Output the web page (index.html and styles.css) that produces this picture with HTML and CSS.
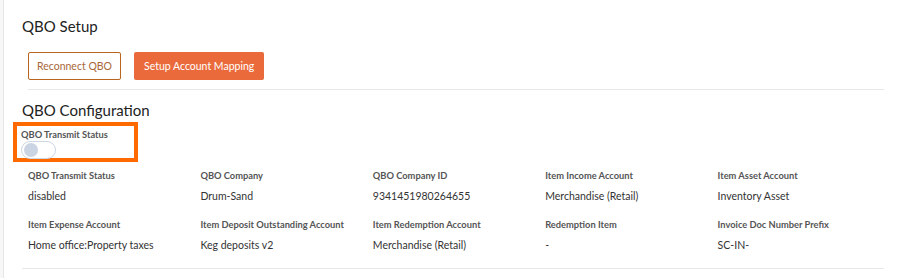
FILE: index.html
```html
<!DOCTYPE html>
<html lang="en">
<head>
    <meta charset="UTF-8">
    <meta name="viewport" content="width=device-width, initial-scale=1.0">
    <title>QBO Setup</title>
    <link rel="stylesheet" href="styles.css">
</head>
<body>
    <div class="edge"></div>
    <div class="main">
        <h2 class="title">QBO Setup</h2>
        <div class="actions">
            <button class="btn btn-outline">Reconnect QBO</button>
            <button class="btn btn-primary">Setup Account Mapping</button>
        </div>

        <h2 class="title title-config">QBO Configuration</h2>
        <div class="highlight">
            <div class="label">QBO Transmit Status</div>
            <div class="switch"><span class="knob"></span></div>
        </div>

        <div class="grid">
            <div class="cell">
                <div class="label">QBO Transmit Status</div>
                <div class="value">disabled</div>
            </div>
            <div class="cell">
                <div class="label">QBO Company</div>
                <div class="value">Drum-Sand</div>
            </div>
            <div class="cell">
                <div class="label">QBO Company ID</div>
                <div class="value">9341451980264655</div>
            </div>
            <div class="cell">
                <div class="label">Item Income Account</div>
                <div class="value">Merchandise (Retail)</div>
            </div>
            <div class="cell">
                <div class="label">Item Asset Account</div>
                <div class="value">Inventory Asset</div>
            </div>
            <div class="cell">
                <div class="label">Item Expense Account</div>
                <div class="value">Home office:Property taxes</div>
            </div>
            <div class="cell">
                <div class="label">Item Deposit Outstanding Account</div>
                <div class="value">Keg deposits v2</div>
            </div>
            <div class="cell">
                <div class="label">Item Redemption Account</div>
                <div class="value">Merchandise (Retail)</div>
            </div>
            <div class="cell">
                <div class="label">Redemption Item</div>
                <div class="value">-</div>
            </div>
            <div class="cell">
                <div class="label">Invoice Doc Number Prefix</div>
                <div class="value">SC-IN-</div>
            </div>
        </div>
    </div>
</body>
</html>
```

FILE: styles.css
```css
*{
    margin: 0;
    padding: 0;
    box-sizing: border-box;
}
body{
    display: flex;
    min-height: 278px;
    font-family: Lato, "Noto Sans", sans-serif;
    color: #333;
    background: #fff;
}
/* left strip */
.edge{
    width: 4px;
    background: #f7f7f7;
    border-right: 1px solid #e6e6e6;
}
.main{
    flex: 1;
    padding: 16px 16px 0 18px;
}
.title{
    font-size: 15px;
    line-height: 20px;
    font-weight: 400;
    color: #222;
}
.actions{
    display: flex;
    gap: 13px;
    margin: 16px 0 0 6px;
    padding-bottom: 9px;
    border-bottom: 1px solid #e8e8e8;
}
.btn{
    height: 28px;
    padding: 0 10px;
    font-family: inherit;
    font-size: 10.5px;
    border-radius: 2px;
    cursor: pointer;
}
.btn-outline{
    background: #fff;
    color: #a8683a;
    border: 1px solid #b9651f;
    padding: 0 8px;
}
.btn-primary{
    background: #ea6a3b;
    color: #fff;
    border: none;
}
.title-config{
    margin-top: 10px;
}
/* orange annotation box */
.highlight{
    width: 125px;
    height: 40px;
    margin: 2px 0 0 -9px;
    padding: 3px 0 0 4px;
    border: 4px solid #ff6a00;
}
.label{
    font-size: 9.3px;
    line-height: 11px;
    font-weight: 700;
    color: #555;
}
.switch{
    width: 35px;
    height: 18px;
    margin-top: 1px;
    border: 1px solid #cdd6e4;
    border-radius: 9px;
    display: flex;
    align-items: center;
    padding-left: 2px;
}
.knob{
    width: 14px;
    height: 14px;
    border-radius: 50%;
    background: #cbd4e2;
}
.grid{
    display: grid;
    grid-template-columns: repeat(5, 1fr);
    margin-top: 8px;
    border-bottom: 1px solid #e8e8e8;
}
.cell{
    padding: 0 6px 16px;
}
.cell .label{
    margin-bottom: 8px;
}
.value{
    font-size: 10.5px;
    line-height: 14px;
    color: #333;
}
```
